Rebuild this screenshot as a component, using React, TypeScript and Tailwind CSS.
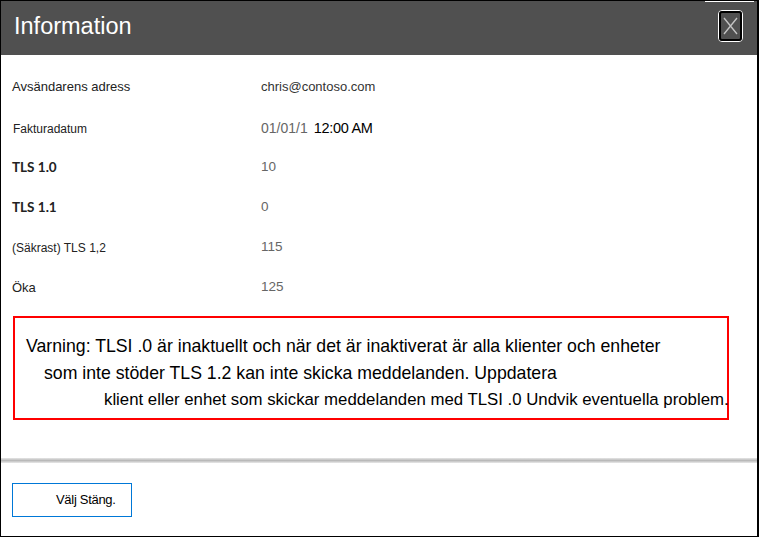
const rows = [
  { label: "Avsändarens adress", value: "chris@contoso.com", labelCls: "text-[13px] text-[#222]", valueCls: "text-[13px] text-[#333]" },
  { label: "Fakturadatum", value: "date", labelCls: "text-[12px] text-[#222] pl-px pt-1", valueCls: "" },
  { label: "TLS 1.0", value: "10", labelCls: "text-[13.5px] font-bold text-[#222] font-['Lato',sans-serif]", valueCls: "text-[13.5px] text-[#666]" },
  { label: "TLS 1.1", value: "0", labelCls: "text-[13.5px] font-bold text-[#222] font-['Lato',sans-serif]", valueCls: "text-[13.5px] text-[#666]" },
  { label: "(Säkrast) TLS 1,2", value: "115", labelCls: "text-[12px] text-[#222] pt-0.5", valueCls: "text-[13.5px] text-[#666]" },
  { label: "Öka", value: "125", labelCls: "text-[13px] text-[#222] pt-0.5", valueCls: "text-[13.5px] text-[#666]" },
];

export default function App() {
  return (
    <div className="relative w-[759px] h-[537px] bg-white border border-black border-r-2 flex flex-col overflow-hidden font-['Liberation_Sans',Arial,sans-serif]">
      {/* header */}
      <div className="h-[54px] shrink-0 bg-[#505050] flex items-center justify-between pl-[13px] pr-[14px]">
        <h1 className="text-[23.5px] text-white leading-none -mt-[2px]">Information</h1>
        <button className="w-[25px] h-[32px] rounded-[4px] border border-white bg-[#505050] flex items-center justify-center -mt-[4px]">
          <span className="w-[23px] h-[30px] rounded-[3px] border-2 border-black flex items-center justify-center">
            <svg width="19" height="26" viewBox="0 0 19 26" className="text-[#c4c4c4]">
              <path d="M3 5 L16 21 M16 5 L3 21" stroke="currentColor" strokeWidth="1.3" fill="none" />
            </svg>
          </span>
        </button>
      </div>
      <div className="absolute top-0 right-[3px] w-[49px] h-px bg-white" />

      {/* details */}
      <div className="pt-[12px] px-[11px]">
        {rows.map((r) => (
          <div key={r.label} className="h-10 flex items-center">
            <div className={`w-[249px] ${r.labelCls}`}>{r.label}</div>
            {r.value === "date" ? (
              <div className="flex items-baseline pt-1">
                <span className="text-[14px] text-[#666]">01/01/1</span>
                <span className="text-[14.5px] text-black ml-[6px] tracking-[-0.3px]">12:00 AM</span>
              </div>
            ) : (
              <div className={r.valueCls}>{r.value}</div>
            )}
          </div>
        ))}
      </div>

      {/* warning */}
      <div className="mt-[9px] ml-[12px] w-[716px] h-[104px] border-2 border-[#ff0000] pt-[15px] text-black whitespace-nowrap">
        <p className="text-[17.7px] leading-[27px] pl-[11px]">
          Varning: TLSI .0 är inaktuellt och när det är inaktiverat är alla klienter och enheter
        </p>
        <p className="text-[17.7px] leading-[27px] pl-[29px]">
          som inte stöder TLS 1.2 kan inte skicka meddelanden. Uppdatera
        </p>
        <p className="text-[16.8px] leading-[25px] pl-[89px]">
          klient eller enhet som skickar meddelanden med TLSI .0 Undvik eventuella problem.
        </p>
      </div>

      {/* separator */}
      <div className="mt-[38px] h-[5px] bg-gradient-to-b from-[#e6e6e6] via-[#b9b9b9] to-[#e9e9e9]" />

      {/* footer */}
      <div className="pt-[20px] px-[11px]">
        <button className="w-[120px] h-[34px] border border-[#0078d7] bg-white text-[13px] text-black pl-[43px] text-left tracking-[-0.3px]">
          Välj Stäng.
        </button>
      </div>
    </div>
  );
}
